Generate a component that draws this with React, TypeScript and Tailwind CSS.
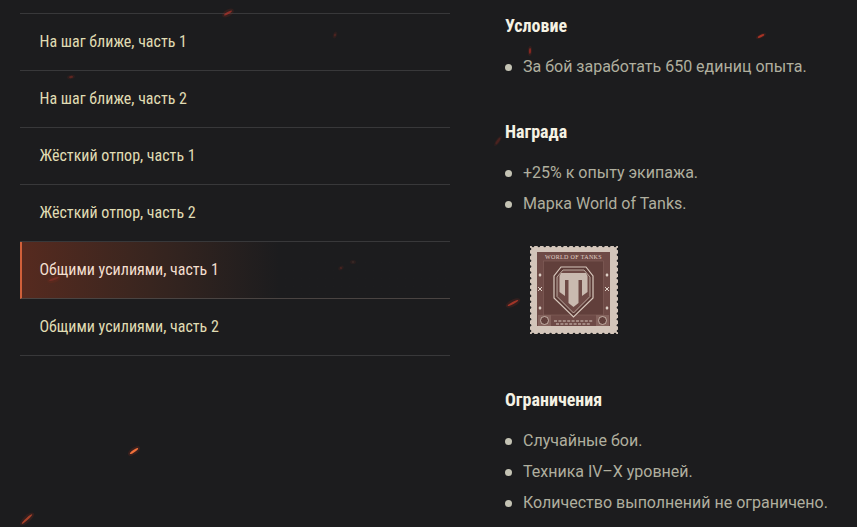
const condensed = "font-['Roboto_Condensed','Roboto','Liberation_Sans',sans-serif]";

const missions = [
  "На шаг ближе, часть 1",
  "На шаг ближе, часть 2",
  "Жёсткий отпор, часть 1",
  "Жёсткий отпор, часть 2",
  "Общими усилиями, часть 1",
  "Общими усилиями, часть 2",
];

// x, y, length, angle, colour, opacity
const sparks: [number, number, number, number, string, number][] = [
  [228, 13, 9, -30, "#a8322a", 0.8],
  [335, 35, 3, -70, "#7a2a22", 0.5],
  [71, 77, 4, -10, "#8c2c22", 0.6],
  [530, 51, 6, -88, "#a02a22", 0.8],
  [761, 36, 7, -25, "#b83626", 0.9],
  [498, 141, 8, -55, "#6a2620", 0.6],
  [513, 303, 12, -28, "#b83a2a", 0.85],
  [134, 451, 10, -35, "#f0703a", 1],
  [27, 519, 14, -42, "#c0482c", 0.85],
  [341, 268, 2, -30, "#7a2a22", 0.5],
  [353, 262, 2, 0, "#5a3a30", 0.5],
  [54, 279, 10, -20, "#93322a", 0.6],
];

function Sparks() {
  return (
    <svg className="absolute inset-0 pointer-events-none" width="857" height="527">
      {sparks.map(([x, y, l, a, c, o], i) => (
        <g key={i} transform={`translate(${x} ${y}) rotate(${a})`} opacity={o}>
          <ellipse rx={l / 2 + 2} ry={l > 8 ? 3.5 : 2} fill="#a8321e" opacity="0.2" />
          <ellipse rx={l / 2} ry="1.1" fill={c} />
        </g>
      ))}
    </svg>
  );
}

function Stamp() {
  const holes = [];
  for (let i = 0; i < 15; i++) {
    const p = 3 + i * 5.86;
    holes.push(
      <circle key={"t" + i} cx={p} cy="0" r="1.3" fill="#1c1c1e" />,
      <circle key={"b" + i} cx={p} cy="88" r="1.3" fill="#1c1c1e" />,
      <circle key={"l" + i} cx="0" cy={p} r="1.3" fill="#1c1c1e" />,
      <circle key={"r" + i} cx="88" cy={p} r="1.3" fill="#1c1c1e" />
    );
  }
  return (
    <svg width="88" height="88" viewBox="0 0 88 88" className="block">
      <rect width="88" height="88" fill="#d3c5ba" />
      {holes}
      <rect x="7" y="6" width="73" height="74" fill="#6e4a46" />
      <rect x="13.5" y="15" width="60" height="54" fill="#613f3b" stroke="#84625c" strokeWidth="0.6" />
      <text x="43.5" y="12.5" textAnchor="middle" fontSize="6" fill="#e0d2c8" fontFamily="'Liberation Serif', serif" letterSpacing="0.35">
        WORLD OF TANKS
      </text>
      <path d="M31 21 H56 L63 30 V52 L43.5 71 L24 52 V30 Z" fill="#5a3935" stroke="#d8c8bd" strokeWidth="1.2" />
      <path d="M33 24 H54 L60 31 V50.5 L43.5 67 L27 50.5 V31 Z" fill="#6e4a46" stroke="#c6b5aa" strokeWidth="0.9" />
      <path d="M31 27 H56 L57.5 30 V46 L52 50 V34 H48.5 V57 L43.5 61 L38.5 57 V34 H35 V50 L29.5 46 V30 Z" fill="#c9bab0" />
      <path d="M10 27 l1.6 2 -1.6 2 -1.6 -2 Z M77 27 l1.6 2 -1.6 2 -1.6 -2 Z M10 60 l1.6 2 -1.6 2 -1.6 -2 Z M77 60 l1.6 2 -1.6 2 -1.6 -2 Z" fill="#e0d2c8" />
      <path d="M8 41 l4 4 M12 41 l-4 4 M75 41 l4 4 M79 41 l-4 4" stroke="#e0d2c8" strokeWidth="1" />
      <rect x="8" y="69" width="13" height="11" fill="#84625c" />
      <rect x="66" y="69" width="13" height="11" fill="#84625c" />
      <circle cx="14.5" cy="74.5" r="4" fill="#613f3b" stroke="#d8c8bd" strokeWidth="0.8" />
      <circle cx="72.5" cy="74.5" r="4" fill="#613f3b" stroke="#d8c8bd" strokeWidth="0.8" />
      <path d="M24 75 H63 M26 78 H61" stroke="#d8c8bd" strokeWidth="1.2" strokeDasharray="3 1.4" />
    </svg>
  );
}

function Heading({ children }: { children: string }) {
  return (
    <h3 className={`${condensed} text-[18px] leading-[24px] font-bold text-[#f5f2e4] [font-stretch:75%]`}>
      {children}
    </h3>
  );
}

function Items({ items }: { items: string[] }) {
  return (
    <ul className="mt-[17px] flex flex-col gap-[7px]">
      {items.map((t) => (
        <li key={t} className="flex items-center h-[24px] text-[16px] text-[#b0af9f] font-['Roboto',sans-serif]">
          <span className="w-[7px] h-[7px] rounded-full bg-[#c4c3b4] mr-[11px]" />
          {t}
        </li>
      ))}
    </ul>
  );
}

export default function App() {
  return (
    <div className="relative w-[857px] h-[527px] overflow-hidden bg-[#1c1c1e]">
      <div className="flex pt-[13px] pl-[20px]">
        <ul className="w-[430px] border-t border-[#38383a]">
          {missions.map((m, i) => (
            <li
              key={m}
              className={
                i === 4
                  ? `${condensed} h-[57px] flex items-center pl-[17.5px] border-l-2 border-b border-l-[#d0603a] border-b-[#4a4442] bg-gradient-to-r from-[#562a1f] via-[#38251f] via-30% to-[#1c1c1e] to-60% text-[16px] text-[#f3dfcf] [font-stretch:75%]`
                  : `${condensed} h-[57px] flex items-center pl-[19.5px] border-b border-[#38383a] text-[16px] text-[#e0dcb4] [font-stretch:75%]`
              }
            >
              {m}
            </li>
          ))}
        </ul>

        <div className="ml-[55px] pt-[1px]">
          <Heading>Условие</Heading>
          <Items items={["За бой заработать 650 единиц опыта."]} />
          <div className="mt-[41px]">
            <Heading>Награда</Heading>
            <Items items={["+25% к опыту экипажа.", "Марка World of Tanks."]} />
          </div>
          <div className="mt-[30px] ml-[25px]">
            <Stamp />
          </div>
          <div className="mt-[54px]">
            <Heading>Ограничения</Heading>
            <Items items={["Случайные бои.", "Техника IV–X уровней.", "Количество выполнений не ограничено."]} />
          </div>
        </div>
      </div>
      <Sparks />
    </div>
  );
}
